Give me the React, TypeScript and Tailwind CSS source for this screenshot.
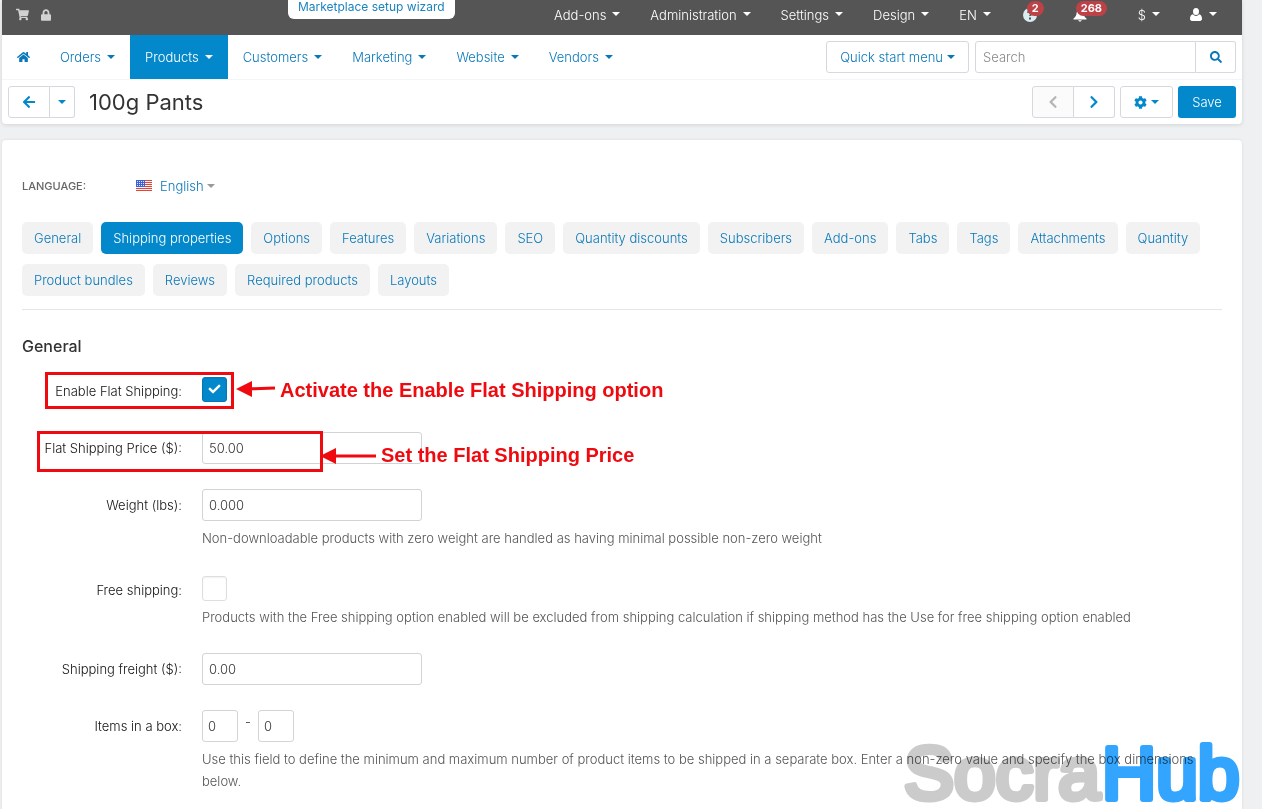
import React from 'react';
import clsx from 'clsx';
import { FaArrowLeft, FaCheck, FaChevronLeft, FaChevronRight, FaCog, FaHome, FaLock, FaSearch, FaShoppingCart } from 'react-icons/fa';

const topMenu = ['Add-ons', 'Administration', 'Settings', 'Design', 'EN'];
const mainMenu = ['Orders', 'Products', 'Customers', 'Marketing', 'Website', 'Vendors'];
const tabs = [
  'General',
  'Shipping properties',
  'Options',
  'Features',
  'Variations',
  'SEO',
  'Quantity discounts',
  'Subscribers',
  'Add-ons',
  'Tabs',
  'Tags',
  'Attachments',
  'Quantity',
  'Product bundles',
  'Reviews',
  'Required products',
  'Layouts',
];

const Caret = ({ className }: { className?: string }) => (
  <span
    className={clsx(
      'inline-block h-0 w-0 shrink-0 border-x-4 border-t-4 border-x-transparent border-t-current',
      className
    )}
  />
);

const BellIcon = () => (
  <svg viewBox="0 0 14 14" className="h-3.5 w-3.5" fill="currentColor" aria-hidden="true">
    <path d="M7 0.5c.6 0 1 .4 1 1v.6c1.500.4 2.300 1.700 2.500 3.400.2 2 .9 3.300 2.700 4.700.5.4.5 1.300-.2 1.300H1c-.7 0-.7-.9-.2-1.300 1.800-1.400 2.500-2.700 2.700-4.700C3.700 3.800 4.500 2.500 6 2.100v-.6c0-.6.4-1 1-1z" />
    <path d="M5.300 12.200h3.400c-.2.900-.8 1.400-1.700 1.400s-1.500-.5-1.700-1.400z" />
  </svg>
);

const UserIcon = () => (
  <svg viewBox="0 0 12 13" className="h-[13px] w-3" fill="currentColor" aria-hidden="true">
    <ellipse cx="6" cy="3.600" rx="3" ry="3.500" />
    <path d="M3 6.300c.8 1.100 1.800 1.700 3 1.700s2.200-.6 3-1.700c2.100.4 3 2.200 3 4.500 0 1.300-.8 2.100-2 2.100H2c-1.200 0-2-.8-2-2.100 0-2.300.9-4.100 3-4.500z" />
  </svg>
);

const HelpIcon = () => (
  <svg viewBox="0 0 14 14" className="h-3.5 w-3.5" aria-hidden="true">
    <circle cx="7" cy="7" r="7" fill="#d9edf2" />
    <path d="M5 5c0-2.600 4-2.600 4 0 0 1.500-2 1.500-2 3" fill="none" stroke="#555" strokeWidth="1.600" />
    <rect x="6" y="9.500" width="2" height="2" fill="#555" />
  </svg>
);

const FlagIcon = () => (
  <svg viewBox="0 0 16 11" className="mb-0.5 h-[11px] w-4" aria-hidden="true">
    <rect width="16" height="11" fill="#fbf3f3" />
    {[0, 2, 4, 6, 8, 10].map((y) => (
      <rect key={y} y={y} width="16" height="1" fill="#e0453a" />
    ))}
    <rect width="9" height="7" fill="#3d62d6" />
    {[1, 3, 5].map((y) =>
      [1, 3, 5, 7].map((x) => <rect key={`${x}-${y}`} x={x} y={y} width="1" height="1" fill="#dfe6fb" />)
    )}
  </svg>
);

const Badge = ({ children }: { children: React.ReactNode }) => (
  <span className="absolute bottom-1.5 left-[21px] h-[15px] rounded-full bg-[#bd4247] px-[5px] text-[11px] leading-[15px] font-bold text-white">
    {children}
  </span>
);

const TopBar = () => (
  <header className="relative flex h-[35px] items-center justify-between bg-[#555] pr-2.5 pl-[14px] text-white">
    <div className="flex items-center gap-3 pb-1.5 text-[#d2d2d2]">
      <a href="#store" aria-label="Storefront">
        <FaShoppingCart className="h-[13px] w-[13px]" />
      </a>
      <a href="#lock" aria-label="Store status">
        <FaLock className="h-3 w-2.5" />
      </a>
    </div>

    <a
      href="#wizard"
      className="absolute top-0 left-[286px] h-[19px] rounded-b-md bg-white px-2.5 text-xs leading-[14px] font-normal text-[#1c84bf]"
    >
      Marketplace setup wizard
    </a>

    <nav className="flex items-center pb-1.5">
      {topMenu.map((item) => (
        <button key={item} type="button" className="flex items-center px-[15px] leading-8">
          {item}
          <Caret className="mb-0.5 ml-1.5" />
        </button>
      ))}
      <button type="button" aria-label="Help" className="relative pr-[18px] pl-[17px]">
        <HelpIcon />
        <Badge>2</Badge>
      </button>
      <button type="button" aria-label="Notifications" className="relative mr-[18px] px-[18px]">
        <BellIcon />
        <Badge>268</Badge>
      </button>
      <button type="button" className="flex items-center px-[15px] leading-8">
        $
        <Caret className="mb-0.5 ml-1.5" />
      </button>
      <button type="button" aria-label="Account" className="flex items-center px-[15px] leading-8">
        <UserIcon />
        <Caret className="mb-0.5 ml-[7px]" />
      </button>
    </nav>
  </header>
);

const MainNav = () => (
  <div className="flex h-11 items-center justify-between pr-1.5 text-[#0878b8]">
    <nav className="flex h-full">
      <a href="#home" aria-label="Home" className="flex items-center px-[15px]">
        <FaHome className="h-3.5 w-[13px]" />
      </a>
      {mainMenu.map((item) => (
        <button
          key={item}
          type="button"
          className={clsx('flex items-center px-[15px]', item === 'Products' && 'bg-[#0388cc] text-white')}
        >
          {item}
          <Caret className="ml-1.5" />
        </button>
      ))}
    </nav>
    <div className="flex gap-1.5">
      <button type="button" className="flex h-8 items-center rounded-[3px] border border-[#d5d9de] px-[13px]">
        Quick start menu
        <Caret className="ml-1" />
      </button>
      <form className="flex">
        <input
          type="text"
          aria-label="Search"
          placeholder="Search"
          className="h-8 w-[221px] rounded-l-[3px] border border-[#d5d9de] px-[7px] placeholder:text-[#888]"
        />
        <button
          type="button"
          aria-label="Find"
          className="flex h-8 w-10 items-center justify-center rounded-r-[3px] border border-l-0 border-[#d5d9de]"
        >
          <FaSearch className="h-3 w-3" />
        </button>
      </form>
    </div>
  </div>
);

const ActionsBar = () => (
  <div className="flex h-[45px] items-center justify-between border-t border-[#f4f5f6] pr-1.5 pl-1.5 text-[#0388cc]">
    <div className="flex items-center">
      <button type="button" aria-label="Back" className="flex h-8 w-[42px] items-center justify-center rounded-l-[3px] border border-[#d5d9de]">
        <FaArrowLeft className="h-3.5 w-3.5" />
      </button>
      <button type="button" aria-label="Back menu" className="flex h-8 w-[25px] items-center justify-center rounded-r-[3px] border border-l-0 border-[#d5d9de]">
        <Caret />
      </button>
      <h1 className="ml-3.5 text-[22px] leading-8 font-normal text-[#333]">100g Pants</h1>
    </div>
    <div className="flex items-center">
      <button type="button" aria-label="Previous" className="flex h-8 w-[42px] items-center justify-center rounded-l-[3px] border border-[#d5d9de] bg-[#fbfbfb] text-[#b5b5b5]">
        <FaChevronLeft className="h-3.5 w-3.5" />
      </button>
      <button type="button" aria-label="Next" className="flex h-8 w-[41px] items-center justify-center rounded-r-[3px] border border-l-0 border-[#d5d9de]">
        <FaChevronRight className="h-3.5 w-3.5" />
      </button>
      <button type="button" aria-label="Tools" className="ml-[5px] flex h-8 w-[53px] items-center justify-center gap-1 rounded-[3px] border border-[#d5d9de]">
        <FaCog className="h-[13px] w-[13px]" />
        <Caret />
      </button>
      <button type="button" className="ml-[5px] h-8 w-[58px] rounded-[3px] bg-[#0388cc] text-white">
        Save
      </button>
    </div>
  </div>
);

interface RowProps {
  id: string;
  label: string;
  help?: string;
  children: React.ReactNode;
}

const Row = ({ id, label, help, children }: RowProps) => (
  <div className="flex min-h-8">
    <label htmlFor={id} className="w-40 shrink-0 text-right leading-8 text-[#111]">
      {label}
    </label>
    <div className="ml-5 flex-1">
      {children}
      {help && <p className="mt-1.5 leading-[22px] text-[#555]">{help}</p>}
    </div>
  </div>
);

const TextField = ({ id, value }: { id: string; value: string }) => (
  <input
    id={id}
    type="text"
    defaultValue={value}
    className="block h-8 w-[220px] rounded-[3px] border border-[#d0d4d6] px-1.5 text-[#333]"
  />
);

const CountField = ({ id, label }: { id: string; label: string }) => (
  <input
    id={id}
    type="text"
    aria-label={label}
    defaultValue="0"
    className="h-8 w-9 rounded-[3px] border border-[#d0d4d6] px-[5px] text-[#333]"
  />
);

const Checkbox = ({ id, checked }: { id: string; checked?: boolean }) => (
  <div className="relative h-[26px] w-[25px] pt-0.5">
    <input
      id={id}
      type="checkbox"
      defaultChecked={checked}
      className="peer block h-[25px] w-[25px] appearance-none rounded-[3px] border border-[#dcdfe2] shadow-[inset_0_1px_2px_rgba(0,0,0,0.06)] checked:border-[#0378b4] checked:bg-[#0388cc]"
    />
    <FaCheck className="pointer-events-none absolute top-2 left-1.5 hidden h-3 w-[13px] text-white peer-checked:block" />
  </div>
);

// Tutorial marks drawn over the form
const Annotations = () => (
  <div className="pointer-events-none absolute inset-0 font-['Liberation_Sans',Arial,sans-serif] text-xl leading-6 font-bold text-[#ee0a0e]">
    <svg className="absolute top-0 left-0 h-[340px] w-[400px]" fill="none" stroke="#ee0a0e" strokeWidth="3">
      <rect x="44.500" y="233.500" width="186" height="34" />
      <rect x="36.500" y="292.500" width="283" height="38" />
      <path d="M250 248.800L273 248" />
      <path d="M332 316H374" />
      <path d="M234 249L250 241V257Z" fill="#ee0a0e" stroke="none" />
      <path d="M318 316L334 308V324Z" fill="#ee0a0e" stroke="none" />
    </svg>
    <p className="absolute top-[238px] left-[278px]">Activate the Enable Flat Shipping option</p>
    <p className="absolute top-[303px] left-[379px]">Set the Flat Shipping Price</p>
  </div>
);

const Watermark = () => (
  <svg
    className="pointer-events-none absolute right-0 bottom-0 h-20 w-[340px] mix-blend-multiply"
    viewBox="0 0 340 80"
    fontFamily="Liberation Sans, Arial, sans-serif"
    fontSize="75"
    fontWeight="400"
    strokeWidth="6"
    strokeLinejoin="round"
  >
    <text x="2" y="70" fill="#cbcbcb" stroke="#cbcbcb">
      Socra
    </text>
    <text x="200" y="70" fill="#33a5ff" stroke="#33a5ff">
      Hub
    </text>
  </svg>
);

const App = () => {
  return (
    <div className="flex min-h-screen flex-col bg-[#eef0f2] pr-5 pl-0.5 font-['Inter',sans-serif] text-[13px] leading-5 font-light">
      <div className="shrink-0 rounded-b bg-white shadow-[0_1px_4px_rgba(0,0,0,0.12)]">
        <TopBar />
        <MainNav />
        <ActionsBar />
      </div>

      <main className="relative mt-4 flex-1 rounded-t bg-white px-5 pt-[34px] shadow-[0_0_3px_rgba(0,0,0,0.1)]">
        <div className="flex h-6 items-center">
          <span className="w-[114px] text-[11px] font-medium text-[#666]">LANGUAGE:</span>
          <FlagIcon />
          <button type="button" className="ml-2 flex items-center text-[#0878b8]">
            English
            <Caret className="ml-[3px] text-[#999]" />
          </button>
        </div>

        <div className="mt-6 flex flex-wrap gap-x-2 gap-y-2.5 border-b border-[#e3e7e9] pb-[13px]">
          {tabs.map((tab) => (
            <a
              key={tab}
              href="#tab"
              className={clsx(
                'h-8 rounded-[5px] px-3 leading-8',
                tab === 'Shipping properties' ? 'bg-[#0388cc] text-white' : 'bg-[#f2f2f2] text-[#0878b8]'
              )}
            >
              {tab}
            </a>
          ))}
        </div>

        <h2 className="mt-6 mb-[17px] text-base leading-6 font-medium text-[#333]">General</h2>

        <div className="flex flex-col gap-[25px]">
          <Row id="flat" label="Enable Flat Shipping:">
            <Checkbox id="flat" checked />
          </Row>
          <Row id="price" label="Flat Shipping Price ($):">
            <TextField id="price" value="50.00" />
          </Row>
          <Row
            id="weight"
            label="Weight (lbs):"
            help="Non-downloadable products with zero weight are handled as having minimal possible non-zero weight"
          >
            <TextField id="weight" value="0.000" />
          </Row>
          <Row
            id="free"
            label="Free shipping:"
            help="Products with the Free shipping option enabled will be excluded from shipping calculation if shipping method has the Use for free shipping option enabled"
          >
            <Checkbox id="free" />
          </Row>
          <Row id="freight" label="Shipping freight ($):">
            <TextField id="freight" value="0.00" />
          </Row>
          <Row
            id="min-items"
            label="Items in a box:"
            help="Use this field to define the minimum and maximum number of product items to be shipped in a separate box. Enter a non-zero value and specify the box dimensions below."
          >
            <div className="flex gap-[7px] leading-6 text-[#333]">
              <CountField id="min-items" label="Minimum items" />
              -
              <CountField id="max-items" label="Maximum items" />
            </div>
          </Row>
        </div>

        <Annotations />
        <Watermark />
      </main>
    </div>
  );
};

export default App;
